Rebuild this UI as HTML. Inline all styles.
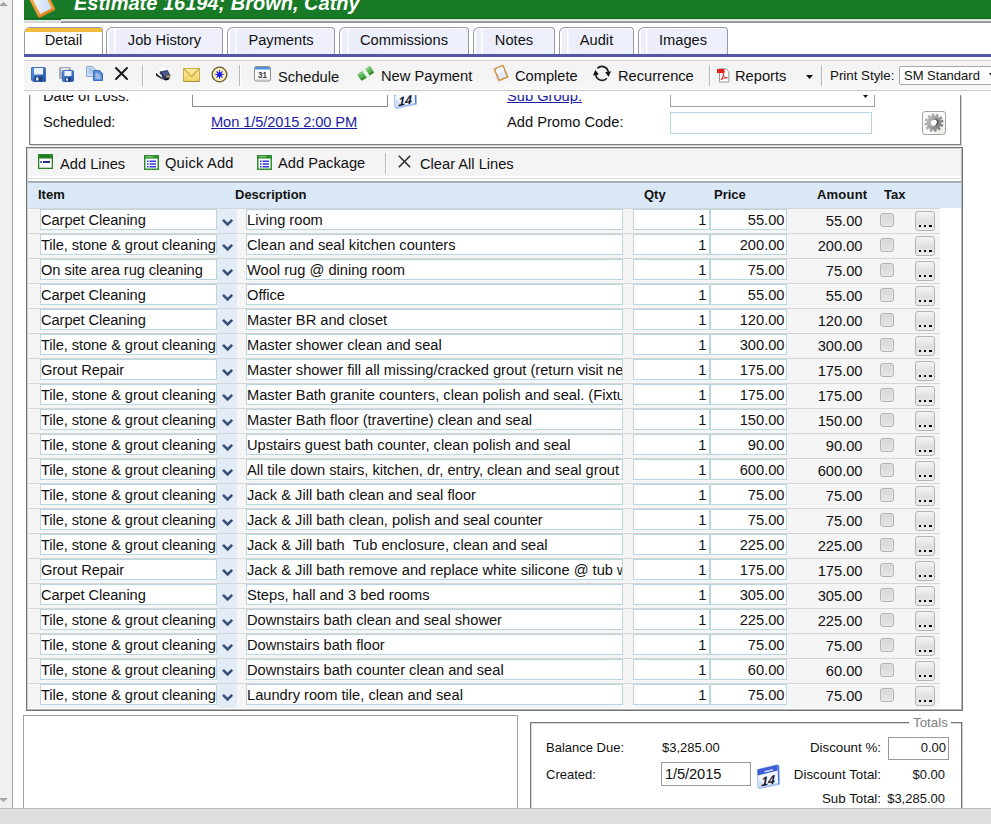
<!DOCTYPE html>
<html><head><meta charset="utf-8"><title>Estimate 16194; Brown, Cathy</title>
<style>
*{box-sizing:border-box;margin:0;padding:0}
html,body{width:991px;height:824px;overflow:hidden;background:#fff}
body{font-family:"Liberation Sans",Arial,sans-serif;font-size:14.67px;color:#111;position:relative}
.abs{position:absolute}
svg{position:absolute;overflow:visible}
#lscroll{left:0;top:0;width:13px;height:808px;background:#f0f0f0;border-right:1px solid #a6a6a6}
#bbar{left:0;top:808px;width:991px;height:16px;background:#dedede;border-top:1px solid #bcbcbc}
#hdr{left:24px;top:0;width:967px;height:19px;background:#187a26;border-bottom:1px solid #0f6619}
#hdr2{left:24px;top:19px;width:37px;height:1px;background:#187a26}
#hdr .t{position:absolute;left:50px;top:-8px;font-size:20px;font-weight:bold;font-style:italic;color:#fff;white-space:nowrap}
#hlight{left:61px;top:19px;width:930px;height:2px;background:linear-gradient(#c4e3c7,#f4f9f4)}
#hline{left:61px;top:21px;width:930px;height:2px;background:linear-gradient(#a9a9af,#85858d)}
#hline2{left:24px;top:20px;width:37px;height:3px;background:linear-gradient(#e9e9e9,#d2d2d2)}
.tab{position:absolute;top:27px;height:28px;border:1px solid #9898a6;border-bottom:none;border-radius:6px 4px 0 0;background:linear-gradient(90deg,#fff 0,#fff 1.5px,#eceefb 2px,#eceefb 7px,#fff 7.2px,#fff 8.4px,#eceefb 8.6px,#eef0fc 100%);text-align:center;line-height:24px;font-size:14.67px;color:#111;box-shadow:inset 0 1px 0 #fff}
.tab.sel{background:#fff}
.tab.sel:before{content:"";position:absolute;left:0;right:0;top:0;height:4px;background:#f3bd3c;border-radius:5px 3px 0 0}
#tabline{left:24px;top:54px;width:967px;height:3px;background:#5656a6}
#tb{left:24px;top:60px;width:967px;height:31px;background:linear-gradient(#f3f3f3,#f4f4f4 60%,#f8f8f8);border-top:1px solid #c9c9c9;border-bottom:1px solid #c9c9c9;box-shadow:inset 0 1px 0 #fdfdfd,inset 0 -1px 0 #fcfcfc}
.tbt{position:absolute;top:68px;font-size:14.67px;white-space:nowrap;line-height:17px}
.sep{position:absolute;width:2px;background:linear-gradient(90deg,#b8b8b8 50%,#fdfdfd 50%)}
a{color:#1c1ca6}
.lbl{position:absolute;white-space:nowrap;font-size:14.67px;line-height:17px}
.s13{font-size:13px}.s133{font-size:13.33px}
#fs{left:29px;top:95px;width:932px;height:51px;border:1px solid #808080;border-top:none;box-shadow:inset 1px 0 0 #d9d9d9,1px 1px 0 #d4d4d4;height:50px}
#box{left:26px;top:147px;width:937px;height:564px;border:1px solid #747474;box-shadow:inset 1px 1px 0 #cfcfcf,inset -1px -1px 0 #b5b5b5;background:#fff}
#ltb{left:28px;top:149px;width:933px;height:30px;background:linear-gradient(#fff 0,#fff 1.5px,#f4f4f4 1.5px,#f4f4f4 27px,#fff 27px,#fff 29px,#d9d9d9 29px,#d9d9d9 30px)}
#lhdrline{left:28px;top:181px;width:933px;height:2px;background:linear-gradient(#9c9c9c,#b4bbc4)}
#lhdr{left:28px;top:183px;width:933px;height:25px;background:#dbe8f6}
#lhdr span{position:absolute;top:4px;font-size:13px;font-weight:bold;line-height:15px;color:#111}
.row{position:absolute;left:28px;width:912px;height:25px;background:#f5f5f5;border-top:1px solid #d6d6d6}
.inp{position:absolute;top:0;height:21px;background:#fff;border:1px solid #b8d6e0;font-size:14.67px;line-height:20px;white-space:nowrap;overflow:hidden;padding:0 1px 0 0}
.item{left:12px;width:177px;padding-left:0;letter-spacing:-0.08px}
.dd{position:absolute;left:189px;top:0;width:20px;height:24px;background:#e3ebf7}
.dd svg{position:absolute;left:4px;top:9px}
.desc{left:218px;width:377px}
.qty{left:605px;width:77px;text-align:right;padding-right:2.5px}
.price{left:682px;width:77px;text-align:right;padding-right:1.5px}
.amt{position:absolute;left:760px;width:74.5px;top:3px;text-align:right;font-size:14.67px;line-height:18px}
.cb{position:absolute;left:852px;top:4px;width:14px;height:14px;border:1px solid #b2b2b2;border-radius:3px;background:linear-gradient(#d7d7d7,#e4e4e4);box-shadow:inset 0 0 0 1px rgba(255,255,255,.25)}
.more{position:absolute;left:887px;top:2px;width:20px;height:20px;border:1px solid #b4b4b4;border-radius:3px;background:linear-gradient(#f4f4f4,#dfdfdf 55%,#ededed)}
.more i{position:absolute;top:12.6px;width:2.9px;height:2.7px;background:#0c0c0c}
.more i:nth-child(1){left:2.6px}.more i:nth-child(2){left:7.6px}.more i:nth-child(3){left:12.7px}
#bl{left:23px;top:715px;width:495px;height:94px;border:1px solid #a0a0a0;border-bottom:none;background:#fff}
#tot{left:530px;top:722px;width:432px;height:90px;border:1px solid #757575;border-bottom:none;box-shadow:inset 1px 1px 0 #d8d8d8,1px 0 0 #d0d0d0}
</style></head><body>
<div class="abs" id="lscroll"></div>
<svg style="left:0;top:2px" width="8" height="4"><path d="M-1 4 L3.5 0 L8 4Z" fill="#a3a3a3"/></svg>
<svg style="left:0;top:798px" width="8" height="4"><path d="M-1 0 L3.5 4 L8 0Z" fill="#a3a3a3"/></svg>
<div class="abs" id="hdr"><div class="t">Estimate 16194; Brown, Cathy</div></div>
<div class="abs" id="hdr2"></div><div class="abs" id="hlight"></div>
<div class="abs" id="hline"></div><div class="abs" id="hline2"></div>
<svg style="left:29px;top:-9px" width="28" height="28" viewBox="0 0 28 28"><defs><linearGradient id="gcl" x1="0" y1="0" x2="0" y2="1"><stop offset="0" stop-color="#f0a545"/><stop offset="0.85" stop-color="#ee9a35"/><stop offset="1" stop-color="#cf7a1c"/></linearGradient><linearGradient id="gpp" x1="0" y1="0" x2="1" y2="1"><stop offset="0" stop-color="#f4f8fe"/><stop offset="1" stop-color="#c9dcf7"/></linearGradient></defs><g transform="rotate(-27 14 14)"><rect x="4.3" y="0" width="18.8" height="24" rx="1.5" fill="url(#gcl)"/><rect x="7.4" y="1" width="12.8" height="19.8" fill="url(#gpp)"/></g></svg>
<div class="tab sel" style="left:24px;width:79px">Detail</div>
<div class="tab" style="left:106px;width:117px">Job History</div>
<div class="tab" style="left:227px;width:108px">Payments</div>
<div class="tab" style="left:339px;width:130px">Commissions</div>
<div class="tab" style="left:473px;width:82px">Notes</div>
<div class="tab" style="left:559px;width:75px">Audit</div>
<div class="tab" style="left:638px;width:90px">Images</div>
<div class="abs" id="tabline"></div>
<div class="abs" id="tb"></div>
<div class="sep" style="left:142px;top:65px;height:21px"></div>
<div class="sep" style="left:239px;top:65px;height:21px"></div>
<div class="sep" style="left:709px;top:65px;height:21px"></div>
<div class="sep" style="left:821px;top:65px;height:21px"></div>
<div class="tbt" style="left:278px;top:69px">Schedule</div>
<div class="tbt" style="left:381px">New Payment</div>
<div class="tbt" style="left:515px">Complete</div>
<div class="tbt" style="left:618px">Recurrence</div>
<div class="tbt" style="left:735px">Reports</div>
<div class="tbt s133" style="left:830px;top:67px">Print Style:</div>
<div class="abs s13" style="left:899px;top:66px;width:100px;height:19px;border:1px solid #a9a9a9;border-radius:2px;background:#fff;line-height:17px;padding-left:4px;white-space:nowrap">SM Standard</div>
<svg style="left:989px;top:73px" width="6" height="4"><path d="M0 0 L6 0 L3 4Z" fill="#111"/></svg>

<div class="abs" id="fs"></div>
<div class="lbl" style="left:43px;top:88px;clip-path:inset(7px 0 0 0)">Date of Loss:</div>
<div class="lbl" style="left:43px;top:114px;letter-spacing:-0.1px">Scheduled:</div>
<div class="lbl" style="left:211px;top:114px;letter-spacing:-0.11px"><a href="#">Mon 1/5/2015 2:00 PM</a></div>
<div class="lbl" style="left:507px;top:88px;clip-path:inset(7px 0 0 0)"><a href="#">Sub Group:</a></div>
<div class="lbl" style="left:507px;top:114px">Add Promo Code:</div>
<div class="abs" style="left:192px;top:95px;width:196px;height:12px;border:1px solid #8c8c8c;border-top:none;background:#fff"></div>
<div class="abs" style="left:670px;top:95px;width:205px;height:12px;border:1px solid #a0a0a0;border-top:none;background:#fff"></div>
<svg style="left:863px;top:95px" width="5" height="3"><path d="M0 0 L5 0 L2.5 3Z" fill="#111"/></svg>
<div class="abs" style="left:670px;top:112px;width:202px;height:22px;border:1px solid #b8d6e0;background:#fff"></div>

<div class="abs" id="box"></div>
<div class="abs" id="ltb"></div>
<div class="tbt" style="left:60px;top:156px">Add Lines</div>
<div class="tbt" style="left:165px;top:155px;letter-spacing:0.2px">Quick Add</div>
<div class="tbt" style="left:278px;top:155px">Add Package</div>
<div class="tbt" style="left:420px;top:156px">Clear All Lines</div>
<div class="sep" style="left:385px;top:153px;height:21px"></div>
<div class="abs" id="lhdrline"></div>
<div class="abs" id="lhdr"><span style="left:10px">Item</span><span style="left:207px">Description</span><span style="left:616px">Qty</span><span style="left:686px">Price</span><span style="left:789px;letter-spacing:0.2px">Amount</span><span style="left:856px">Tax</span></div>
<!-- save -->
<svg style="left:31px;top:67px" width="15" height="15" viewBox="0 0 15 15"><defs><linearGradient id="gb" x1="0" y1="0" x2="1" y2="1"><stop offset="0" stop-color="#5b9ae6"/><stop offset="1" stop-color="#1f4fa3"/></linearGradient></defs><path d="M1 0.5 H13.5 Q14.5 0.5 14.5 1.5 V14.5 H2 L0.5 13 V1 Q0.5 0.5 1 0.5Z" fill="url(#gb)" stroke="#2a5db0" stroke-width="0.8"/><rect x="3" y="1" width="9" height="6.5" fill="#edf2fa"/><rect x="3.5" y="9.5" width="8" height="5" fill="#223f7d"/><rect x="5" y="10.5" width="2.5" height="3" fill="#dfe7f3"/></svg>
<!-- save all -->
<svg style="left:59px;top:67px" width="15" height="15" viewBox="0 0 15 15"><rect x="0.5" y="0.5" width="11" height="11" rx="1" fill="#aab3c4" stroke="#8e98ab" stroke-width="0.8"/><rect x="2.5" y="1" width="7" height="4" fill="#e4e8ef"/><rect x="3.5" y="3.5" width="11" height="11" rx="1" fill="url(#gb)" stroke="#2a5db0" stroke-width="0.8"/><rect x="5.5" y="4" width="7" height="5" fill="#edf2fa"/><rect x="6" y="10.5" width="6" height="4" fill="#223f7d"/><rect x="7" y="11.3" width="2" height="2.5" fill="#dfe7f3"/></svg>
<!-- copy -->
<svg style="left:86px;top:66px" width="17" height="15" viewBox="0 0 17 15"><path d="M0.5 0.5 H6.5 L9.5 3.5 V10.5 H0.5Z" fill="#c9dcf4" stroke="#7fa3d6" stroke-width="0.9"/><path d="M2.5 3 H6 M2.5 5 H7 M2.5 7 H7" stroke="#8fb0de" stroke-width="0.9"/><path d="M7.5 4.5 H13.5 L16.5 7.5 V14.5 H7.5Z" fill="#5d8fd8" stroke="#2f62b6" stroke-width="0.9"/><path d="M9.5 8 H12.5 M9.5 10 H14.5 M9.5 12 H14.5" stroke="#dfe9f8" stroke-width="1"/></svg>
<!-- X -->
<svg style="left:115px;top:67px" width="13" height="13" viewBox="0 0 13 13"><path d="M1 1 L12 12 M12 1 L1 12" stroke="#1a1a1a" stroke-width="2" stroke-linecap="round"/></svg>
<!-- printer -->
<svg style="left:155px;top:65px" width="17" height="16" viewBox="0 0 17 16"><path d="M2.5 3.5 L4.5 1 L11.5 2 L11 6 L4 7Z" fill="#fff" stroke="#dcdcdc" stroke-width="0.5"/><path d="M5 6.5 L12.5 5 L15.5 10.5 L14 14.5 L9 15 L4.5 10Z" fill="#2f3d68"/><path d="M7 7.2 L12 6.2 L14 10 L9.5 11Z" fill="#465a8c"/><path d="M1 8 L4.5 10.5 L9 15 L5 13 L1 10.5Z" fill="#0c0c0c"/><path d="M2.5 7.5 L6.5 10 L7 12.5 L3 10Z" fill="#fff"/><path d="M11 10.5 L15 10 L15 12.5 L11.5 13Z" fill="#a48f5c"/><path d="M9.5 13.5 L14.5 13 L13 15 L10 15.5Z" fill="#0e0e0e"/></svg>
<!-- envelope -->
<svg style="left:183px;top:67.5px" width="17" height="14" viewBox="0 0 17 14"><defs><linearGradient id="ge" x1="0" y1="0" x2="0" y2="1"><stop offset="0" stop-color="#fcea9c"/><stop offset="1" stop-color="#f3d56a"/></linearGradient></defs><rect x="0.5" y="0.5" width="16" height="13" fill="url(#ge)" stroke="#c3a545" stroke-width="0.9"/><path d="M1 1 L8.5 8.6 L16 1" fill="none" stroke="#caa944" stroke-width="1.1"/><path d="M1 13 L6.3 7 M16 13 L10.7 7" stroke="#e0c668" stroke-width="0.8"/><path d="M0.5 13.4 H16.5" stroke="#a98c30" stroke-width="0.9"/></svg>
<!-- burst circle -->
<svg style="left:211px;top:66px" width="17" height="17" viewBox="0 0 17 17"><circle cx="8.5" cy="8.5" r="7.3" fill="#f7eeb6" stroke="#5f572c" stroke-width="1.3"/><g stroke="#2a2af0" stroke-width="1.1"><path d="M8.5 4.3 V12.7 M4.3 8.5 H12.7 M5.5 5.5 L11.5 11.5 M11.5 5.5 L5.5 11.5"/></g><circle cx="8.5" cy="8.5" r="2.3" fill="#1212e4"/></svg>
<!-- calendar 31 -->
<svg style="left:254px;top:66px" width="17" height="16" viewBox="0 0 17 16"><rect x="0.5" y="0.5" width="16" height="14.5" rx="1.8" fill="#fdfdfd" stroke="#8d8d8d" stroke-width="1"/><path d="M1 3.5 V2 Q1 1 2 1 H15 Q16 1 16 2 V3.5Z" fill="#4f8fdc"/><path d="M1.5 14 H15.5" stroke="#c0c0c0" stroke-width="1"/><text x="8.5" y="12.3" font-family="Liberation Sans, sans-serif" font-size="9.5" font-weight="bold" text-anchor="middle" fill="#3a3a3a" textLength="9" lengthAdjust="spacingAndGlyphs">31</text></svg>
<!-- money -->
<svg style="left:357px;top:66px" width="17" height="15" viewBox="0 0 17 15"><g transform="rotate(-33 8.8 7.5) translate(8.8 7.5) scale(.86) translate(-8.8 -7.5)"><rect x="0" y="3.4" width="17.6" height="8.6" rx="1" fill="#2f8a24"/><rect x="0" y="3" width="17.6" height="6.6" rx="1" fill="#58b656"/><rect x="1" y="3.6" width="15.6" height="2" fill="#7fcf7c"/><rect x="7" y="2.8" width="4.2" height="9.2" fill="#f3f9f0"/></g></svg>
<!-- complete clipboard -->
<svg style="left:492px;top:64px" width="18" height="18" viewBox="0 0 18 18"><g transform="rotate(-22 9 9)"><rect x="3.5" y="2" width="11" height="14" rx="1" fill="#cf9548"/><rect x="5.2" y="3.6" width="7.6" height="10.8" fill="#dfeafa"/><rect x="5.2" y="3.6" width="7.6" height="5" fill="#f3f7fd"/></g></svg>
<!-- recurrence -->
<svg style="left:593px;top:65px" width="18" height="17" viewBox="0 0 18 17"><path d="M4.4 3.4 A6.3 6.3 0 0 1 15.2 7.3" fill="none" stroke="#1c1c1c" stroke-width="1.7"/><path d="M13.8 13.2 A6.3 6.3 0 0 1 2.8 9.5" fill="none" stroke="#1c1c1c" stroke-width="1.7"/><path d="M12.2 7.3 L18 6.2 L15.6 11.8Z" fill="#111"/><path d="M0 10.6 L5.8 9.6 L2.4 5Z" fill="#111"/></svg>
<!-- pdf -->
<svg style="left:717px;top:68px" width="13" height="15" viewBox="0 0 13 15"><path d="M2.5 0.8 H9 L11.8 3.6 V14 H2.5Z" fill="#fff" stroke="#8e8e8e" stroke-width="0.9"/><rect x="0" y="1" width="7.5" height="4" fill="#e02222"/><path d="M4 12 C6 9 7 6.5 6.5 5.5 C6 5 5.5 7 7.5 9 C9 10.5 10.5 10.2 10.2 9.6 C9.8 9 6 10 4 12Z" fill="none" stroke="#d42020" stroke-width="1"/></svg>
<!-- reports caret -->
<svg style="left:806px;top:75px" width="7" height="4"><path d="M0 0 H7 L3.5 4Z" fill="#111"/></svg>
<!-- add lines -->
<svg style="left:38px;top:154px" width="15" height="15" viewBox="0 0 15 15"><rect x="0.65" y="0.65" width="13.7" height="13.7" fill="#fff" stroke="#2d7f2d" stroke-width="1.3"/><rect x="0" y="0" width="15" height="4.6" fill="#2a8a2a"/><path d="M2 2 H4.5 M5.5 2 H8 M9 2.6 H11" stroke="#145a14" stroke-width="1.2"/><path d="M2.3 8 H3.8" stroke="#3a3ab8" stroke-width="2"/><path d="M5 8 H12" stroke="#2b2b9a" stroke-width="2"/></svg>
<!-- quick add -->
<svg style="left:144px;top:155px" width="15" height="15" viewBox="0 0 15 15"><g id="ql"><rect x="0.75" y="0.75" width="13.5" height="13.5" fill="#fff" stroke="#2f8f2f" stroke-width="1.5"/><rect x="0" y="0" width="15" height="3.6" fill="#2f8f2f"/><path d="M2 1.8 H9" stroke="#9ad09a" stroke-width="1"/><path d="M3 6.3 H4.6 M3 9 H4.6 M3 11.7 H4.6" stroke="#3535d8" stroke-width="1.4"/><path d="M5.6 6.3 H12 M5.6 9 H12 M5.6 11.7 H12" stroke="#3535d8" stroke-width="1.4"/></g></svg>
<svg style="left:257px;top:155px" width="15" height="15" viewBox="0 0 15 15"><use href="#ql"/></svg>
<!-- clear X -->
<svg style="left:398px;top:155px" width="13" height="13" viewBox="0 0 13 13"><path d="M0.8 0.8 L12.2 12.2 M12.2 0.8 L0.8 12.2" stroke="#2a2a2a" stroke-width="1.5"/></svg>
<!-- date icons -->
<svg style="left:394px;top:95px;overflow:hidden" width="23" height="14" viewBox="0 11 23 14"><g id="cal"><path d="M0.5 5.5 L20.5 0.8 L22 1.8 L22.3 20.3 L2 24.5 L0.8 23Z" fill="#f2f7fe" stroke="#8eabe8" stroke-width="0.8"/><path d="M0.6 14 L1.2 23 L9 21.5 Z" fill="#cfe0f9"/><path d="M20.5 0.8 L22 1.8 L22.3 20.3 L21.2 20.5Z" fill="#4a6fe0"/><path d="M0.5 5.5 L20.5 0.8 L20.7 6.6 L0.7 11.6Z" fill="#3c5fd6"/><path d="M7.5 7 L16 5 L16 6.6 L7.5 8.6Z" fill="#cfdcfa"/><path d="M0.8 23 L21.2 19 L21.2 20.5 L2 24.5Z" fill="#a9c2f2"/><text x="11" y="23.3" transform="skewY(-12)" font-family="Liberation Sans, sans-serif" font-size="12.5" font-weight="bold" font-style="italic" text-anchor="middle" fill="#15152a" letter-spacing="-0.3">14</text></g></svg>
<svg style="left:757px;top:764px" width="23" height="25" viewBox="0 0 23 25"><use href="#cal"/></svg>
<!-- gear button -->
<div class="abs" style="left:922px;top:111px;width:24px;height:24px;border:1px solid #a3a3ab;border-radius:3px;background:linear-gradient(135deg,#fbfbfb 60%,#e6ebdf)"></div>
<svg style="left:924px;top:113px" width="20" height="20" viewBox="0 0 20 20"><defs><linearGradient id="gg" x1="0" y1="0" x2="1" y2="1"><stop offset="0" stop-color="#b9b9b9"/><stop offset="0.5" stop-color="#9c9c9c"/><stop offset="1" stop-color="#7f7f7f"/></linearGradient></defs><g transform="rotate(-20 10 9.8)"><ellipse cx="10" cy="9.8" rx="8.3" ry="7.9" fill="none" stroke="url(#gg)" stroke-width="2.6" stroke-dasharray="2.5 1.78"/><ellipse cx="10" cy="9.8" rx="5.4" ry="5.1" fill="none" stroke="url(#gg)" stroke-width="4.2"/></g><ellipse cx="11.2" cy="9.4" rx="3" ry="3.4" fill="#4a4a4a" transform="rotate(25 11.2 9.4)"/><ellipse cx="10.2" cy="9.6" rx="2.5" ry="3.2" fill="#fdfdfd" transform="rotate(25 10.2 9.6)"/></svg>

<div class="row" style="top:208px">
<div class="inp item">Carpet Cleaning</div><div class="dd"><svg width="13" height="9" viewBox="0 0 13 9"><path d="M2 1.8 L6.6 6.4 L11.2 1.8" fill="none" stroke="#3a4e7c" stroke-width="2.6"/></svg></div>
<div class="inp desc">Living room</div><div class="inp qty">1</div><div class="inp price">55.00</div><div class="amt">55.00</div><div class="cb"></div><div class="more"><i></i><i></i><i></i></div>
</div>
<div class="row" style="top:233px">
<div class="inp item">Tile, stone &amp; grout cleaning</div><div class="dd"><svg width="13" height="9" viewBox="0 0 13 9"><path d="M2 1.8 L6.6 6.4 L11.2 1.8" fill="none" stroke="#3a4e7c" stroke-width="2.6"/></svg></div>
<div class="inp desc">Clean and seal kitchen counters</div><div class="inp qty">1</div><div class="inp price">200.00</div><div class="amt">200.00</div><div class="cb"></div><div class="more"><i></i><i></i><i></i></div>
</div>
<div class="row" style="top:258px">
<div class="inp item">On site area rug cleaning</div><div class="dd"><svg width="13" height="9" viewBox="0 0 13 9"><path d="M2 1.8 L6.6 6.4 L11.2 1.8" fill="none" stroke="#3a4e7c" stroke-width="2.6"/></svg></div>
<div class="inp desc">Wool rug @ dining room</div><div class="inp qty">1</div><div class="inp price">75.00</div><div class="amt">75.00</div><div class="cb"></div><div class="more"><i></i><i></i><i></i></div>
</div>
<div class="row" style="top:283px">
<div class="inp item">Carpet Cleaning</div><div class="dd"><svg width="13" height="9" viewBox="0 0 13 9"><path d="M2 1.8 L6.6 6.4 L11.2 1.8" fill="none" stroke="#3a4e7c" stroke-width="2.6"/></svg></div>
<div class="inp desc">Office</div><div class="inp qty">1</div><div class="inp price">55.00</div><div class="amt">55.00</div><div class="cb"></div><div class="more"><i></i><i></i><i></i></div>
</div>
<div class="row" style="top:308px">
<div class="inp item">Carpet Cleaning</div><div class="dd"><svg width="13" height="9" viewBox="0 0 13 9"><path d="M2 1.8 L6.6 6.4 L11.2 1.8" fill="none" stroke="#3a4e7c" stroke-width="2.6"/></svg></div>
<div class="inp desc">Master BR and closet</div><div class="inp qty">1</div><div class="inp price">120.00</div><div class="amt">120.00</div><div class="cb"></div><div class="more"><i></i><i></i><i></i></div>
</div>
<div class="row" style="top:333px">
<div class="inp item">Tile, stone &amp; grout cleaning</div><div class="dd"><svg width="13" height="9" viewBox="0 0 13 9"><path d="M2 1.8 L6.6 6.4 L11.2 1.8" fill="none" stroke="#3a4e7c" stroke-width="2.6"/></svg></div>
<div class="inp desc">Master shower clean and seal</div><div class="inp qty">1</div><div class="inp price">300.00</div><div class="amt">300.00</div><div class="cb"></div><div class="more"><i></i><i></i><i></i></div>
</div>
<div class="row" style="top:358px">
<div class="inp item">Grout Repair</div><div class="dd"><svg width="13" height="9" viewBox="0 0 13 9"><path d="M2 1.8 L6.6 6.4 L11.2 1.8" fill="none" stroke="#3a4e7c" stroke-width="2.6"/></svg></div>
<div class="inp desc">Master shower fill all missing/cracked grout (return visit needed)</div><div class="inp qty">1</div><div class="inp price">175.00</div><div class="amt">175.00</div><div class="cb"></div><div class="more"><i></i><i></i><i></i></div>
</div>
<div class="row" style="top:383px">
<div class="inp item">Tile, stone &amp; grout cleaning</div><div class="dd"><svg width="13" height="9" viewBox="0 0 13 9"><path d="M2 1.8 L6.6 6.4 L11.2 1.8" fill="none" stroke="#3a4e7c" stroke-width="2.6"/></svg></div>
<div class="inp desc">Master Bath granite counters, clean polish and seal. (Fixtures)</div><div class="inp qty">1</div><div class="inp price">175.00</div><div class="amt">175.00</div><div class="cb"></div><div class="more"><i></i><i></i><i></i></div>
</div>
<div class="row" style="top:408px">
<div class="inp item">Tile, stone &amp; grout cleaning</div><div class="dd"><svg width="13" height="9" viewBox="0 0 13 9"><path d="M2 1.8 L6.6 6.4 L11.2 1.8" fill="none" stroke="#3a4e7c" stroke-width="2.6"/></svg></div>
<div class="inp desc">Master Bath floor (travertine) clean and seal</div><div class="inp qty">1</div><div class="inp price">150.00</div><div class="amt">150.00</div><div class="cb"></div><div class="more"><i></i><i></i><i></i></div>
</div>
<div class="row" style="top:433px">
<div class="inp item">Tile, stone &amp; grout cleaning</div><div class="dd"><svg width="13" height="9" viewBox="0 0 13 9"><path d="M2 1.8 L6.6 6.4 L11.2 1.8" fill="none" stroke="#3a4e7c" stroke-width="2.6"/></svg></div>
<div class="inp desc">Upstairs guest bath counter, clean polish and seal</div><div class="inp qty">1</div><div class="inp price">90.00</div><div class="amt">90.00</div><div class="cb"></div><div class="more"><i></i><i></i><i></i></div>
</div>
<div class="row" style="top:458px">
<div class="inp item">Tile, stone &amp; grout cleaning</div><div class="dd"><svg width="13" height="9" viewBox="0 0 13 9"><path d="M2 1.8 L6.6 6.4 L11.2 1.8" fill="none" stroke="#3a4e7c" stroke-width="2.6"/></svg></div>
<div class="inp desc">All tile down stairs, kitchen, dr, entry, clean and seal grout</div><div class="inp qty">1</div><div class="inp price">600.00</div><div class="amt">600.00</div><div class="cb"></div><div class="more"><i></i><i></i><i></i></div>
</div>
<div class="row" style="top:483px">
<div class="inp item">Tile, stone &amp; grout cleaning</div><div class="dd"><svg width="13" height="9" viewBox="0 0 13 9"><path d="M2 1.8 L6.6 6.4 L11.2 1.8" fill="none" stroke="#3a4e7c" stroke-width="2.6"/></svg></div>
<div class="inp desc">Jack &amp; Jill bath clean and seal floor</div><div class="inp qty">1</div><div class="inp price">75.00</div><div class="amt">75.00</div><div class="cb"></div><div class="more"><i></i><i></i><i></i></div>
</div>
<div class="row" style="top:508px">
<div class="inp item">Tile, stone &amp; grout cleaning</div><div class="dd"><svg width="13" height="9" viewBox="0 0 13 9"><path d="M2 1.8 L6.6 6.4 L11.2 1.8" fill="none" stroke="#3a4e7c" stroke-width="2.6"/></svg></div>
<div class="inp desc">Jack &amp; Jill bath clean, polish and seal counter</div><div class="inp qty">1</div><div class="inp price">75.00</div><div class="amt">75.00</div><div class="cb"></div><div class="more"><i></i><i></i><i></i></div>
</div>
<div class="row" style="top:533px">
<div class="inp item">Tile, stone &amp; grout cleaning</div><div class="dd"><svg width="13" height="9" viewBox="0 0 13 9"><path d="M2 1.8 L6.6 6.4 L11.2 1.8" fill="none" stroke="#3a4e7c" stroke-width="2.6"/></svg></div>
<div class="inp desc">Jack &amp; Jill bath  Tub enclosure, clean and seal</div><div class="inp qty">1</div><div class="inp price">225.00</div><div class="amt">225.00</div><div class="cb"></div><div class="more"><i></i><i></i><i></i></div>
</div>
<div class="row" style="top:558px">
<div class="inp item">Grout Repair</div><div class="dd"><svg width="13" height="9" viewBox="0 0 13 9"><path d="M2 1.8 L6.6 6.4 L11.2 1.8" fill="none" stroke="#3a4e7c" stroke-width="2.6"/></svg></div>
<div class="inp desc">Jack &amp; Jill bath remove and replace white silicone @ tub walls</div><div class="inp qty">1</div><div class="inp price">175.00</div><div class="amt">175.00</div><div class="cb"></div><div class="more"><i></i><i></i><i></i></div>
</div>
<div class="row" style="top:583px">
<div class="inp item">Carpet Cleaning</div><div class="dd"><svg width="13" height="9" viewBox="0 0 13 9"><path d="M2 1.8 L6.6 6.4 L11.2 1.8" fill="none" stroke="#3a4e7c" stroke-width="2.6"/></svg></div>
<div class="inp desc">Steps, hall and 3 bed rooms</div><div class="inp qty">1</div><div class="inp price">305.00</div><div class="amt">305.00</div><div class="cb"></div><div class="more"><i></i><i></i><i></i></div>
</div>
<div class="row" style="top:608px">
<div class="inp item">Tile, stone &amp; grout cleaning</div><div class="dd"><svg width="13" height="9" viewBox="0 0 13 9"><path d="M2 1.8 L6.6 6.4 L11.2 1.8" fill="none" stroke="#3a4e7c" stroke-width="2.6"/></svg></div>
<div class="inp desc">Downstairs bath clean and seal shower</div><div class="inp qty">1</div><div class="inp price">225.00</div><div class="amt">225.00</div><div class="cb"></div><div class="more"><i></i><i></i><i></i></div>
</div>
<div class="row" style="top:633px">
<div class="inp item">Tile, stone &amp; grout cleaning</div><div class="dd"><svg width="13" height="9" viewBox="0 0 13 9"><path d="M2 1.8 L6.6 6.4 L11.2 1.8" fill="none" stroke="#3a4e7c" stroke-width="2.6"/></svg></div>
<div class="inp desc">Downstairs bath floor</div><div class="inp qty">1</div><div class="inp price">75.00</div><div class="amt">75.00</div><div class="cb"></div><div class="more"><i></i><i></i><i></i></div>
</div>
<div class="row" style="top:658px">
<div class="inp item">Tile, stone &amp; grout cleaning</div><div class="dd"><svg width="13" height="9" viewBox="0 0 13 9"><path d="M2 1.8 L6.6 6.4 L11.2 1.8" fill="none" stroke="#3a4e7c" stroke-width="2.6"/></svg></div>
<div class="inp desc">Downstairs bath counter clean and seal</div><div class="inp qty">1</div><div class="inp price">60.00</div><div class="amt">60.00</div><div class="cb"></div><div class="more"><i></i><i></i><i></i></div>
</div>
<div class="row" style="top:683px">
<div class="inp item">Tile, stone &amp; grout cleaning</div><div class="dd"><svg width="13" height="9" viewBox="0 0 13 9"><path d="M2 1.8 L6.6 6.4 L11.2 1.8" fill="none" stroke="#3a4e7c" stroke-width="2.6"/></svg></div>
<div class="inp desc">Laundry room tile, clean and seal</div><div class="inp qty">1</div><div class="inp price">75.00</div><div class="amt">75.00</div><div class="cb"></div><div class="more"><i></i><i></i><i></i></div>
</div>
<div class="abs" id="bl"></div>
<div class="abs" id="tot"></div>
<div class="lbl s133" style="left:909px;top:714px;color:#808080;background:#fff;padding:0 4px;width:42px">Totals</div>
<div class="lbl s13" style="left:546px;top:739px">Balance Due:</div>
<div class="lbl s13" style="left:662px;top:739px">$3,285.00</div>
<div class="lbl s13" style="left:546px;top:766px">Created:</div>
<div class="abs" style="left:661px;top:762px;width:90px;height:24px;border:1px solid #999;background:#fff;font-size:14.67px;line-height:23px;padding-left:3px;letter-spacing:-0.1px">1/5/2015</div>
<div class="lbl s133" style="left:781px;top:739px;width:100px;text-align:right">Discount %:</div>
<div class="abs s13" style="left:888px;top:737px;width:61px;height:23px;border:1px solid #999;background:#fff;line-height:20px;text-align:right;padding-right:2px">0.00</div>
<div class="lbl s133" style="left:781px;top:766px;width:100px;text-align:right">Discount Total:</div>
<div class="lbl s13" style="left:845px;top:766px;width:100px;text-align:right">$0.00</div>
<div class="lbl s133" style="left:781px;top:790px;width:100px;text-align:right">Sub Total:</div>
<div class="lbl s13" style="left:845px;top:790px;width:100px;text-align:right">$3,285.00</div>
<div class="abs" id="bbar"></div>
</body></html>
